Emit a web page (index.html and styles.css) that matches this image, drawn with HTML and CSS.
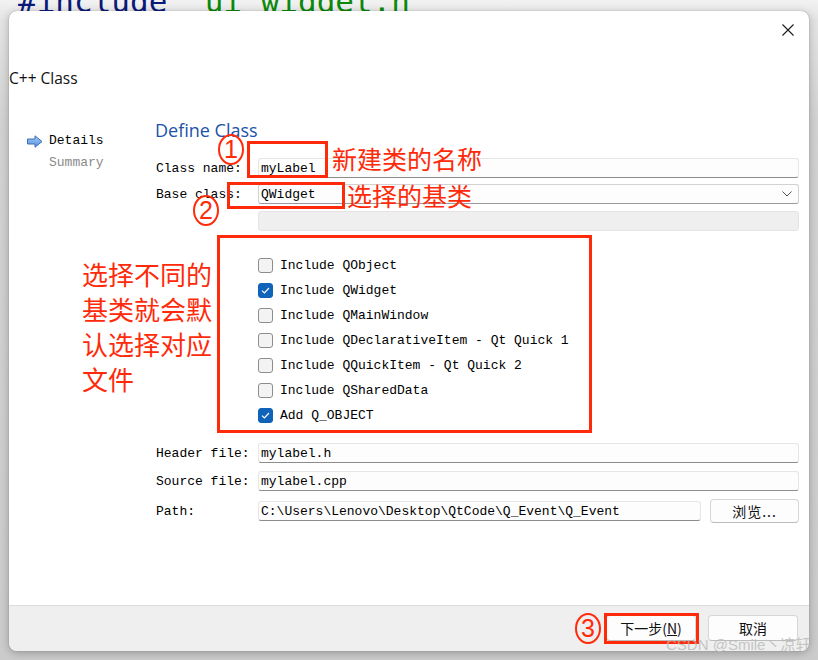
FILE: index.html
```html
<!DOCTYPE html>
<html lang="zh">
<head>
<meta charset="utf-8">
<title>C++ Class</title>
<link rel="stylesheet" href="styles.css">
</head>
<body>
<div class="code-behind"><span class="kw">#include</span> <span class="str">"ui_widget.h"</span></div>
<div class="dialog">
  <div class="titlebar">
    <span class="close" aria-label="close">
      <svg width="12" height="12" viewBox="0 0 12 12"><path d="M0.5 0.5 L11.5 11.5 M11.5 0.5 L0.5 11.5" stroke="#1a1a1a" stroke-width="1.1" fill="none"/></svg>
    </span>
  </div>
  <div class="heading">C++ Class</div>
  <div class="content">
    <nav class="steps">
      <div class="step active">
        <svg class="arrow" width="16" height="13" viewBox="0 0 16 13">
          <defs><linearGradient id="ag" x1="0" y1="0" x2="0" y2="1"><stop offset="0" stop-color="#a9cdf5"/><stop offset="1" stop-color="#4f8fdc"/></linearGradient></defs>
          <path d="M0.5 4 H8 V0.8 L15 6.5 L8 12.2 V9 H0.5 Z" fill="url(#ag)" stroke="#3a6fb8" stroke-width="1"/>
        </svg>
        <span>Details</span>
      </div>
      <div class="step muted">Summary</div>
    </nav>
    <main class="page">
      <h2 class="page-title">Define Class</h2>
      <div class="row row-name"><span class="lbl">Class name:</span><div class="field">myLabel</div></div>
      <div class="row row-base"><span class="lbl">Base class:</span><div class="field combo"><span>QWidget</span>
        <svg class="chev" width="10" height="6" viewBox="0 0 10 6"><path d="M0.5 0.5 L5 5 L9.5 0.5" stroke="#555" stroke-width="1" fill="none"/></svg></div></div>
      <div class="row row-disabled"><span class="lbl"></span><div class="field disabled"></div></div>
      <div class="checks">
        <div class="check"><span class="box"></span><span>Include QObject</span></div>
        <div class="check"><span class="box on"><svg width="15" height="15" viewBox="0 0 15 15"><path d="M4 7.6 L6.4 10 L11 5" stroke="#fff" stroke-width="1.2" fill="none"/></svg></span><span>Include QWidget</span></div>
        <div class="check"><span class="box"></span><span>Include QMainWindow</span></div>
        <div class="check"><span class="box"></span><span>Include QDeclarativeItem - Qt Quick 1</span></div>
        <div class="check"><span class="box"></span><span>Include QQuickItem - Qt Quick 2</span></div>
        <div class="check"><span class="box"></span><span>Include QSharedData</span></div>
        <div class="check"><span class="box on"><svg width="15" height="15" viewBox="0 0 15 15"><path d="M4 7.6 L6.4 10 L11 5" stroke="#fff" stroke-width="1.2" fill="none"/></svg></span><span>Add Q_OBJECT</span></div>
      </div>
      <div class="row row-header"><span class="lbl">Header file:</span><div class="field">mylabel.h</div></div>
      <div class="row row-source"><span class="lbl">Source file:</span><div class="field">mylabel.cpp</div></div>
      <div class="row row-path"><span class="lbl">Path:</span><div class="field">C:\Users\Lenovo\Desktop\QtCode\Q_Event\Q_Event</div><button class="btn browse">浏览...</button></div>
    </main>
  </div>
  <div class="footer">
    <button class="btn">下一步(<u>N</u>)</button>
    <button class="btn">取消</button>
  </div>

  <div class="mark box-name"></div>
  <div class="num num-1">1</div>
  <div class="note note-1">新建类的名称</div>
  <div class="mark box-base"></div>
  <div class="num num-2">2</div>
  <div class="note note-2">选择的基类</div>
  <div class="mark box-checks"></div>
  <div class="note note-left">选择不同的<br>基类就会默<br>认选择对应<br>文件</div>
  <div class="num num-3">3</div>
  <div class="mark box-next"></div>
</div>
<div class="watermark">CSDN @Smile丶凉轩</div>
</body>
</html>
```
FILE: styles.css
```css
html, body {
  margin: 0;
  padding: 0;
}
body {
  width: 818px;
  height: 660px;
  overflow: hidden;
  position: relative;
  padding: 11px 9px 0 9px;
  box-sizing: border-box;
  background: linear-gradient(180deg, #f2f2f2 0px, #e4e4e4 20px, #d2d2d2 120px, #cbcbcb 660px);
  font-family: "Liberation Mono", "Noto Sans CJK SC", monospace;
}
.code-behind {
  position: absolute;
  left: 18px;
  top: -14px;
  font-family: "DejaVu Sans Mono", "Liberation Mono", monospace;
  font-size: 31px;
  line-height: 31px;
  white-space: pre;
}
.code-behind .kw { color: #0a1a7a; }
.code-behind .str { color: #0b8a0b; }

.dialog {
  position: relative;
  width: 800px;
  height: 640px;
  background: #ffffff;
  border-radius: 8px;
  box-shadow: 0 0 1px rgba(0,0,0,0.45), 0 2px 8px rgba(0,0,0,0.25);
  display: flex;
  flex-direction: column;
}
.titlebar {
  height: 38px;
  display: flex;
  align-items: center;
  justify-content: flex-end;
  padding-right: 15px;
}
.close { display: flex; width: 12px; height: 12px; }
.heading {
  margin-top: 19px;
  height: 20px;
  line-height: 20px;
  font-family: "Open Sans", "Noto Sans", sans-serif;
  font-size: 15.5px;
  color: #111;
}
.content {
  flex: 1;
  display: flex;
}
.steps {
  width: 146px;
  padding-top: 42px;
  font-size: 13px;
}
.step {
  height: 22px;
  line-height: 22px;
  padding-left: 40px;
  color: #000;
}
.step.active {
  padding-left: 18px;
  display: flex;
  align-items: center;
  gap: 6px;
}
.step.muted { color: #8a8a8a; }
.page {
  flex: 1;
  padding: 30px 10px 0 1px;
  font-size: 13px;
  color: #000;
}
.page-title {
  margin: 0 0 0 -1px;
  height: 24px;
  line-height: 24px;
  font-family: "Open Sans", "Noto Sans", sans-serif;
  font-weight: normal;
  font-size: 18px;
  color: #2052a8;
}
.row {
  display: flex;
  align-items: center;
  height: 20px;
}
.lbl {
  width: 102px;
  flex: none;
  white-space: pre;
}
.field {
  flex: 1;
  height: 20px;
  line-height: 19px;
  box-sizing: border-box;
  border: 1px solid #e6e6e6;
  border-bottom-color: #8c8c8c;
  border-radius: 3px;
  background: #fdfdfd;
  padding-left: 2px;
  white-space: pre;
}
.row-name { margin-top: 16px; }
.row-base { margin-top: 6px; }
.row-disabled { margin-top: 7px; }
.combo {
  display: flex;
  justify-content: space-between;
  align-items: center;
  border-color: #d2d2d2;
  border-bottom-color: #9a9a9a;
  padding-right: 6px;
}
.field.disabled {
  background: #efefef;
  border-color: #e4e4e4;
}
.checks {
  margin-top: 22px;
  padding-left: 102px;
}
.check {
  height: 25px;
  display: flex;
  align-items: center;
  gap: 7px;
  white-space: pre;
}
.box {
  width: 15px;
  height: 15px;
  box-sizing: border-box;
  border: 1px solid #8d8d8d;
  border-radius: 3px;
  background: #f3f3f3;
  display: flex;
}
.box.on {
  background: #0f63b9;
  border-color: #0f63b9;
}
.box.on svg { margin: -1px; }
.row-header { margin-top: 15px; }
.row-source { margin-top: 8px; }
.row-path { margin-top: 8px; height: 24px; }
.btn {
  font-family: "Noto Sans CJK SC", "Liberation Sans", sans-serif;
  font-size: 14px;
  color: #111;
  background: #fdfdfd;
  border: 1px solid #d6d6d6;
  border-bottom-color: #bcbcbc;
  border-radius: 4px;
  padding: 0;
  height: 26px;
  line-height: 24px;
}
.btn.browse {
  width: 89px;
  height: 24px;
  line-height: 22px;
  flex: none;
  margin-left: 9px;
  letter-spacing: 1px;
}
.footer {
  height: 46px;
  box-sizing: border-box;
  border-top: 1px solid #dcdcdc;
  background: #efefef;
  border-radius: 0 0 8px 8px;
  display: flex;
  justify-content: flex-end;
  align-items: flex-start;
  gap: 12px;
  padding: 9px 11px 0 0;
}
.footer .btn { width: 90px; }

/* red annotations */
.mark {
  position: absolute;
  border: 3px solid #ff2a0a;
  box-sizing: border-box;
}
.box-name { left: 238px; top: 130px; width: 81px; height: 37px; }
.box-base { left: 218px; top: 171px; width: 118px; height: 27px; }
.box-checks { left: 208px; top: 224px; width: 375px; height: 198px; }
.box-next { left: 595px; top: 602px; width: 95px; height: 31px; }
.num {
  position: absolute;
  width: 26px;
  height: 31px;
  box-sizing: border-box;
  border: 2px solid #ff2a0a;
  border-radius: 50%;
  color: #ff2a0a;
  font-family: "Liberation Sans", sans-serif;
  font-size: 25px;
  line-height: 27px;
  text-align: center;
}
.num-1 { left: 209px; top: 123px; }
.num-2 { left: 184px; top: 184px; }
.num-3 { left: 566px; top: 602px; }
.note {
  position: absolute;
  color: #ff2a0a;
  font-family: "Noto Sans CJK SC", sans-serif;
  font-size: 25px;
  line-height: 30px;
  white-space: nowrap;
}
.note-1 { left: 323px; top: 132px; }
.note-2 { left: 338px; top: 169px; }
.note-left { left: 73px; top: 245px; line-height: 35px; font-size: 26px; }
.watermark {
  position: absolute;
  left: 666px;
  top: 636px;
  line-height: 18px;
  font-family: "Liberation Sans", "Noto Sans CJK SC", sans-serif;
  font-size: 15px;
  color: rgba(185,185,185,0.8);
  white-space: nowrap;
}
```
